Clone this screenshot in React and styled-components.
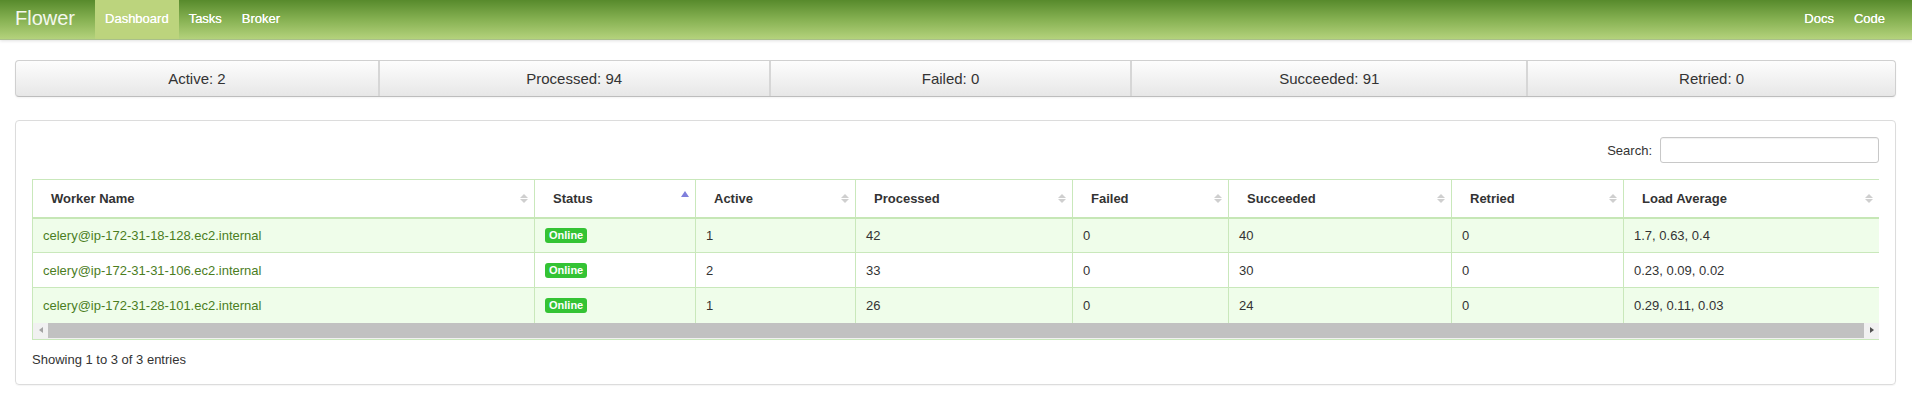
import React from "react";
import styled, { createGlobalStyle } from "styled-components";

const GlobalStyle = createGlobalStyle`
  html, body { margin: 0; padding: 0; background: #fff; }
  body {
    font-family: "Liberation Sans", Arial, Helvetica, sans-serif;
    font-size: 13px;
    color: #333;
  }
  * { box-sizing: border-box; }
`;

const NavBar = styled.header`
  height: 40px;
  display: flex;
  align-items: stretch;
  padding: 0 17px 0 15px;
  background: linear-gradient(to bottom, #578a2c 0%, #86b152 50%, #b4d27c 100%);
  border-bottom: 1px solid #a9bf8a;
  box-shadow: 0 1px 3px rgba(0, 0, 0, 0.12);
`;

const Brand = styled.a`
  font-size: 20px;
  line-height: 37px;
  color: #f4f8ee;
  padding-right: 20px;
  text-decoration: none;
`;

const NavGroup = styled.nav`
  display: flex;
  align-items: stretch;
  margin-left: ${(p) => (p.$right ? "auto" : "0")};
`;

const NavLink = styled.a`
  display: block;
  padding: 0 10px;
  line-height: 38px;
  font-size: 13px;
  color: #fff;
  text-decoration: none;
  text-shadow: 0 0 0.4px #fff;
  background: ${(p) => (p.$active ? "#bcd47d" : "transparent")};
`;

const Page = styled.main`
  padding: 20px 16px 8px 15px;
`;

const StatsBar = styled.div`
  display: grid;
  grid-template-columns: 362fr 391fr 362fr 396fr 369fr;
  height: 37px;
  border: 1px solid #d0d0d0;
  border-bottom-color: #bdbdbd;
  border-radius: 4px;
  overflow: hidden;
  background: linear-gradient(to bottom, #fdfdfd, #e7e7e7);
  box-shadow: 0 1px 2px rgba(0, 0, 0, 0.05);
`;

const Stat = styled.div`
  display: flex;
  align-items: center;
  justify-content: center;
  font-size: 15px;
  color: #333;
  border-left: ${(p) => (p.$first ? "none" : "2px solid #d6d6d6")};
`;

const Panel = styled.section`
  margin-top: 23px;
  border: 1px solid #dcdcdc;
  border-radius: 4px;
  padding: 16px 16px 14px 16px;
  box-shadow: 0 1px 1px rgba(0, 0, 0, 0.04);
`;

const SearchRow = styled.div`
  display: flex;
  justify-content: flex-end;
  align-items: center;
  gap: 8px;
  margin-bottom: 16px;
`;

const SearchLabel = styled.label`
  font-size: 13px;
  color: #333;
`;

const SearchInput = styled.input`
  width: 219px;
  height: 26px;
  border: 1px solid #c8c8c8;
  border-radius: 3px;
  box-shadow: inset 0 1px 1px rgba(0, 0, 0, 0.06);
  outline: none;
`;

const Table = styled.table`
  width: 100%;
  table-layout: fixed;
  border-collapse: collapse;
  font-size: 13px;
  border-left: 1px solid #c9e8bb;
`;

const HeadCell = styled.th`
  height: 38px;
  padding: 0 6px 0 18px;
  text-align: left;
  font-weight: bold;
  color: #333;
  background: #fff;
  border-top: 1px solid #c9e8bb;
  border-right: 1px solid #c9e8bb;
  border-bottom: 2px solid #c6e7b6;
  &:last-child { border-right: none; }
`;

const HeadInner = styled.div`
  display: flex;
  align-items: center;
  justify-content: space-between;
`;

const SortIcon = styled.span`
  display: flex;
  flex-direction: column;
  gap: 1px;
  align-self: ${(p) => (p.$sorted ? "flex-start" : "center")};
  margin-top: ${(p) => (p.$sorted ? "0" : "0")};
`;

const Tri = styled.span`
  width: 0;
  height: 0;
  border-left: 4px solid transparent;
  border-right: 4px solid transparent;
  ${(p) =>
    p.$down
      ? `border-top: 4px solid ${p.$color};`
      : `border-bottom: ${p.$big ? 6 : 4}px solid ${p.$color};`}
`;

const Row = styled.tr`
  background: ${(p) => (p.$odd ? "#effdea" : "#fff")};
`;

const Cell = styled.td`
  height: 35px;
  padding: 0 10px;
  color: #333;
  border-top: 1px solid #c9e8bb;
  border-right: 1px solid #c9e8bb;
  white-space: nowrap;
  &:last-child { border-right: none; }
`;

const WorkerLink = styled.a`
  color: #4b7d1e;
  text-decoration: none;
`;

const Badge = styled.span`
  display: inline-block;
  padding: 1px 4px;
  line-height: 13px;
  font-size: 11px;
  font-weight: bold;
  color: #fff;
  background: #34c334;
  border-radius: 3px;
`;

const ScrollBar = styled.div`
  display: flex;
  align-items: center;
  height: 15px;
  background: #f1f1f1;
  border-left: 1px solid #c9e8bb;
  border-bottom: 1px solid #c9e8bb;
  box-sizing: content-box;
  padding-bottom: 1px;
`;

const ScrollArrow = styled.span`
  width: 15px;
  height: 15px;
  display: flex;
  align-items: center;
  justify-content: center;
  &::before {
    content: "";
    width: 0;
    height: 0;
    border-top: 3.5px solid transparent;
    border-bottom: 3.5px solid transparent;
    ${(p) =>
      p.$right
        ? "border-left: 4px solid #505050;"
        : "border-right: 4px solid #a3a3a3;"}
  }
`;

const ScrollThumb = styled.span`
  flex: 1;
  height: 15px;
  background: #c1c1c1;
`;

const Info = styled.div`
  margin-top: 10px;
  line-height: 20px;
  font-size: 13px;
  color: #333;
`;

const columns = [
  { name: "Worker Name", width: 502 },
  { name: "Status", width: 161, sorted: true },
  { name: "Active", width: 160 },
  { name: "Processed", width: 217 },
  { name: "Failed", width: 156 },
  { name: "Succeeded", width: 223 },
  { name: "Retried", width: 172 },
  { name: "Load Average" },
];

const workers = [
  { name: "celery@ip-172-31-18-128.ec2.internal", active: 1, processed: 42, failed: 0, succeeded: 40, retried: 0, load: "1.7, 0.63, 0.4" },
  { name: "celery@ip-172-31-31-106.ec2.internal", active: 2, processed: 33, failed: 0, succeeded: 30, retried: 0, load: "0.23, 0.09, 0.02" },
  { name: "celery@ip-172-31-28-101.ec2.internal", active: 1, processed: 26, failed: 0, succeeded: 24, retried: 0, load: "0.29, 0.11, 0.03" },
];

const stats = ["Active: 2", "Processed: 94", "Failed: 0", "Succeeded: 91", "Retried: 0"];

function Sort({ sorted }) {
  if (sorted) {
    return (
      <SortIcon $sorted>
        <Tri $big $color="#7f7fdc" />
      </SortIcon>
    );
  }
  return (
    <SortIcon>
      <Tri $color="#cfcfcf" />
      <Tri $down $color="#cfcfcf" />
    </SortIcon>
  );
}

export default function App() {
  return (
    <>
      <GlobalStyle />
      <NavBar>
        <Brand href="#">Flower</Brand>
        <NavGroup>
          <NavLink href="#" $active>Dashboard</NavLink>
          <NavLink href="#">Tasks</NavLink>
          <NavLink href="#">Broker</NavLink>
        </NavGroup>
        <NavGroup $right>
          <NavLink href="#">Docs</NavLink>
          <NavLink href="#">Code</NavLink>
        </NavGroup>
      </NavBar>
      <Page>
        <StatsBar>
          {stats.map((s, i) => (
            <Stat key={s} $first={i === 0}>{s}</Stat>
          ))}
        </StatsBar>
        <Panel>
          <SearchRow>
            <SearchLabel htmlFor="search">Search:</SearchLabel>
            <SearchInput id="search" type="search" />
          </SearchRow>
          <Table>
            <colgroup>
              {columns.map((c) => (
                <col key={c.name} style={c.width ? { width: c.width } : undefined} />
              ))}
            </colgroup>
            <thead>
              <tr>
                {columns.map((c) => (
                  <HeadCell key={c.name}>
                    <HeadInner>
                      <span>{c.name}</span>
                      <Sort sorted={c.sorted} />
                    </HeadInner>
                  </HeadCell>
                ))}
              </tr>
            </thead>
            <tbody>
              {workers.map((w, i) => (
                <Row key={w.name} $odd={i % 2 === 0}>
                  <Cell><WorkerLink href="#">{w.name}</WorkerLink></Cell>
                  <Cell><Badge>Online</Badge></Cell>
                  <Cell>{w.active}</Cell>
                  <Cell>{w.processed}</Cell>
                  <Cell>{w.failed}</Cell>
                  <Cell>{w.succeeded}</Cell>
                  <Cell>{w.retried}</Cell>
                  <Cell>{w.load}</Cell>
                </Row>
              ))}
            </tbody>
          </Table>
          <ScrollBar>
            <ScrollArrow />
            <ScrollThumb />
            <ScrollArrow $right />
          </ScrollBar>
          <Info>Showing 1 to 3 of 3 entries</Info>
        </Panel>
      </Page>
    </>
  );
}
